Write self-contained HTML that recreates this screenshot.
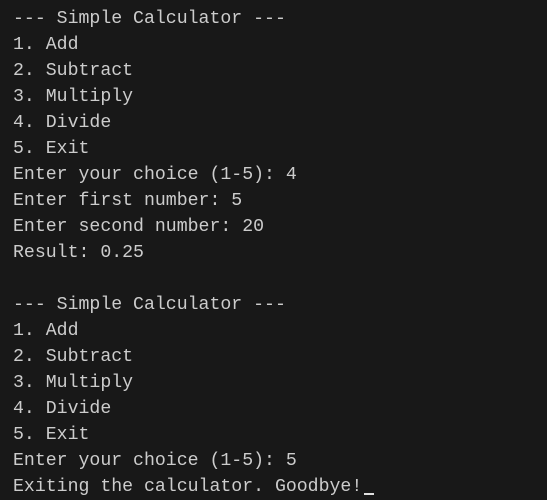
<!DOCTYPE html>
<html><head><style>
html,body{margin:0;padding:0;background:#181818;width:547px;height:499px;overflow:hidden}
pre{margin:0;position:absolute;left:13px;top:6px;font-family:"Liberation Mono",monospace;font-size:18.2px;line-height:26px;color:#cccccc}
.cur{display:inline-block;width:10px;height:2px;background:#e0e0e0;vertical-align:-4px;margin-left:2px}
</style></head><body><pre>--- Simple Calculator ---
1. Add
2. Subtract
3. Multiply
4. Divide
5. Exit
Enter your choice (1-5): 4
Enter first number: 5
Enter second number: 20
Result: 0.25

--- Simple Calculator ---
1. Add
2. Subtract
3. Multiply
4. Divide
5. Exit
Enter your choice (1-5): 5
Exiting the calculator. Goodbye!<span class="cur"></span></pre></body></html>
